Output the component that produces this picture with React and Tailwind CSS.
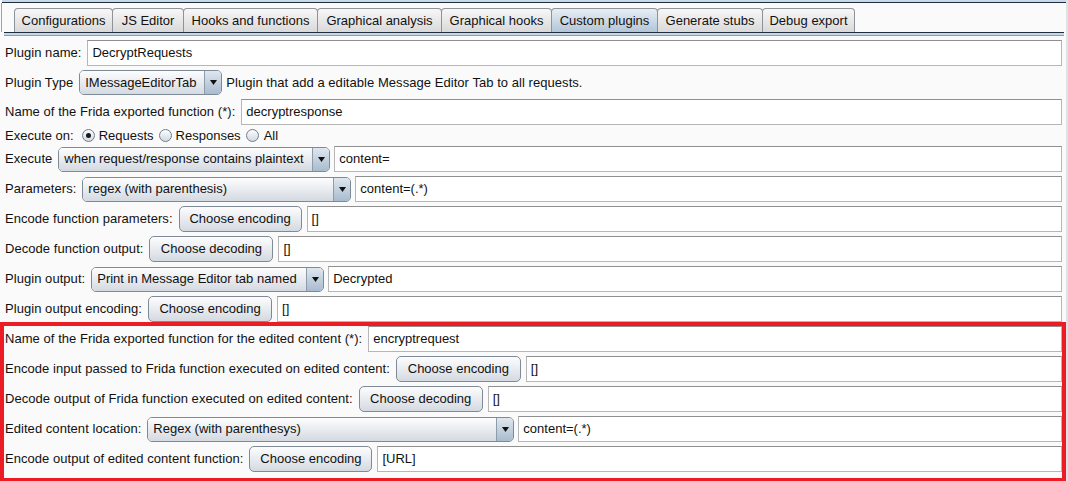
import React from 'react';

const tabs = [
  ['Configurations', 'w-[99px]'],
  ['JS Editor', 'w-[72px]'],
  ['Hooks and functions', 'w-[135px]'],
  ['Graphical analysis', 'w-[125px]'],
  ['Graphical hooks', 'w-[111px]'],
  ['Custom plugins', 'w-[107px]'],
  ['Generate stubs', 'w-[106px]'],
  ['Debug export', 'w-[93px]'],
];

function Row({ children, h = 'h-[30px]' }) {
  return <div className={`flex items-center gap-[4px] ${h}`}>{children}</div>;
}

function Label({ children }) {
  return <span className="mr-[2px] whitespace-nowrap tracking-[0.05px]">{children}</span>;
}

function Field({ value }) {
  return (
    <div className="flex-1 h-[26px] bg-white border border-[#b6b6b6] border-t-[#8f8f8f] flex items-center pl-[4px] whitespace-nowrap">
      {value}
    </div>
  );
}

function Button({ label, w }) {
  return (
    <div className={`h-[26px] mr-px rounded-[5px] border border-[#7e8a96] bg-linear-to-b from-[#fdfdfe] to-[#d4dae1] flex items-center justify-center whitespace-nowrap ${w}`}>
      {label}
    </div>
  );
}

function Dropdown({ value, w }) {
  return (
    <div className={`h-[25px] rounded-[5px] border border-[#7e8a96] flex overflow-hidden ${w}`}>
      <div className="flex-1 bg-linear-to-b from-[#fdfdfe] to-[#d4dae1] flex items-center pl-[5px] whitespace-nowrap">
        {value}
      </div>
      <div className="w-[17px] border-l border-[#8d9bab] bg-linear-to-b from-[#dfe7ef] to-[#a8bbce] flex items-center justify-center">
        <svg width="7" height="5" viewBox="0 0 7 5">
          <polygon points="0,0 7,0 3.5,5" fill="#111" />
        </svg>
      </div>
    </div>
  );
}

function Radio({ checked }) {
  return (
    <span className="w-[13px] h-[13px] rounded-full border border-[#6f7d8c] bg-linear-to-b from-[#fbfcfd] to-[#d3dae2] flex items-center justify-center">
      {checked && <span className="w-[5px] h-[5px] rounded-full bg-[#1a1a1a]" />}
    </span>
  );
}

export default function App() {
  return (
    <div className="w-[1068px] h-[481px] relative overflow-hidden bg-[#fafafa] font-['Liberation_Sans',Arial,sans-serif] text-[13px] text-[#111] border-r-[2px] border-[#dde2e7]">
      {/* tab strip */}
      <div className="h-[2px] bg-[#c9d9e9] ml-[2px]" />
      <div className="h-px bg-[#1f2e3d] ml-[2px]" />
      <div className="flex h-[29px] pt-[5px] pl-[12px] ml-px border-l border-[#9aa4ae]">
        {tabs.map(([name, w], i) => (
          <div
            key={name}
            className={`h-[24px] border border-b-0 border-[#8e9399] rounded-t-[4px] flex items-center justify-center whitespace-nowrap ${w} ${i > 0 ? '-ml-px' : ''} ${
              name === 'Custom plugins'
                ? 'bg-linear-to-b from-[#e8eef4] to-[#b2c5d8]'
                : 'bg-linear-to-b from-[#f7f7f7] to-[#d9d9d9]'
            }`}
          >
            {name}
          </div>
        ))}
      </div>
      <div className="h-px bg-[#1f2e3d] ml-[4px] mr-[2px]" />
      <div className="h-[2px] bg-[#c6d7e8] ml-[4px] mr-[2px]" />
      <div className="h-px bg-[#8f9cab] ml-[4px] mr-[2px]" />

      {/* form */}
      <div className="pt-px pl-[5px] pr-[4px]">
        <Row h="h-[31px] pt-px">
          <Label>Plugin name:</Label>
          <Field value="DecryptRequests" />
        </Row>
        <Row h="h-[29px]">
          <Label>Plugin Type</Label>
          <Dropdown value="IMessageEditorTab" w="w-[143px]" />
          <span className="whitespace-nowrap tracking-[0.05px]">Plugin that add a editable Message Editor Tab to all requests.</span>
        </Row>
        <Row>
          <Label>Name of the Frida exported function (*):</Label>
          <Field value="decryptresponse" />
        </Row>
        <Row h="h-[17px]">
          <span className="mr-[4px] whitespace-nowrap">Execute on:</span>
          <Radio checked />
          <span className="mr-[1px]">Requests</span>
          <Radio />
          <span className="mr-[1px]">Responses</span>
          <Radio />
          <span className="ml-[1px]">All</span>
        </Row>
        <Row>
          <Label>Execute</Label>
          <Dropdown value="when request/response contains plaintext" w="w-[272px]" />
          <Field value="content=" />
        </Row>
        <Row>
          <Label>Parameters:</Label>
          <Dropdown value="regex (with parenthesis)" w="w-[269px]" />
          <Field value="content=(.*)" />
        </Row>
        <Row>
          <Label>Encode function parameters:</Label>
          <Button label="Choose encoding" w="w-[123px]" />
          <Field value="[]" />
        </Row>
        <Row>
          <Label>Decode function output:</Label>
          <Button label="Choose decoding" w="w-[124px]" />
          <Field value="[]" />
        </Row>
        <Row>
          <Label>Plugin output:</Label>
          <Dropdown value="Print in Message Editor tab named" w="w-[233px]" />
          <Field value="Decrypted" />
        </Row>
        <Row>
          <Label>Plugin output encoding:</Label>
          <Button label="Choose encoding" w="w-[124px]" />
          <Field value="[]" />
        </Row>
        <Row>
          <Label>Name of the Frida exported function for the edited content (*):</Label>
          <Field value="encryptrequest" />
        </Row>
        <Row>
          <Label>Encode input passed to Frida function executed on edited content:</Label>
          <Button label="Choose encoding" w="w-[125px]" />
          <Field value="[]" />
        </Row>
        <Row>
          <Label>Decode output of Frida function executed on edited content:</Label>
          <Button label="Choose decoding" w="w-[124px]" />
          <Field value="[]" />
        </Row>
        <Row>
          <Label>Edited content location:</Label>
          <Dropdown value="Regex (with parenthesys)" w="w-[367px]" />
          <Field value="content=(.*)" />
        </Row>
        <Row>
          <Label>Encode output of edited content function:</Label>
          <Button label="Choose encoding" w="w-[123px]" />
          <Field value="[URL]" />
        </Row>
      </div>

      {/* red annotation frame */}
      <div className="absolute left-0 top-[322px] w-[1066px] h-[160px] border-4 border-[#ec1c24] pointer-events-none" />
    </div>
  );
}
